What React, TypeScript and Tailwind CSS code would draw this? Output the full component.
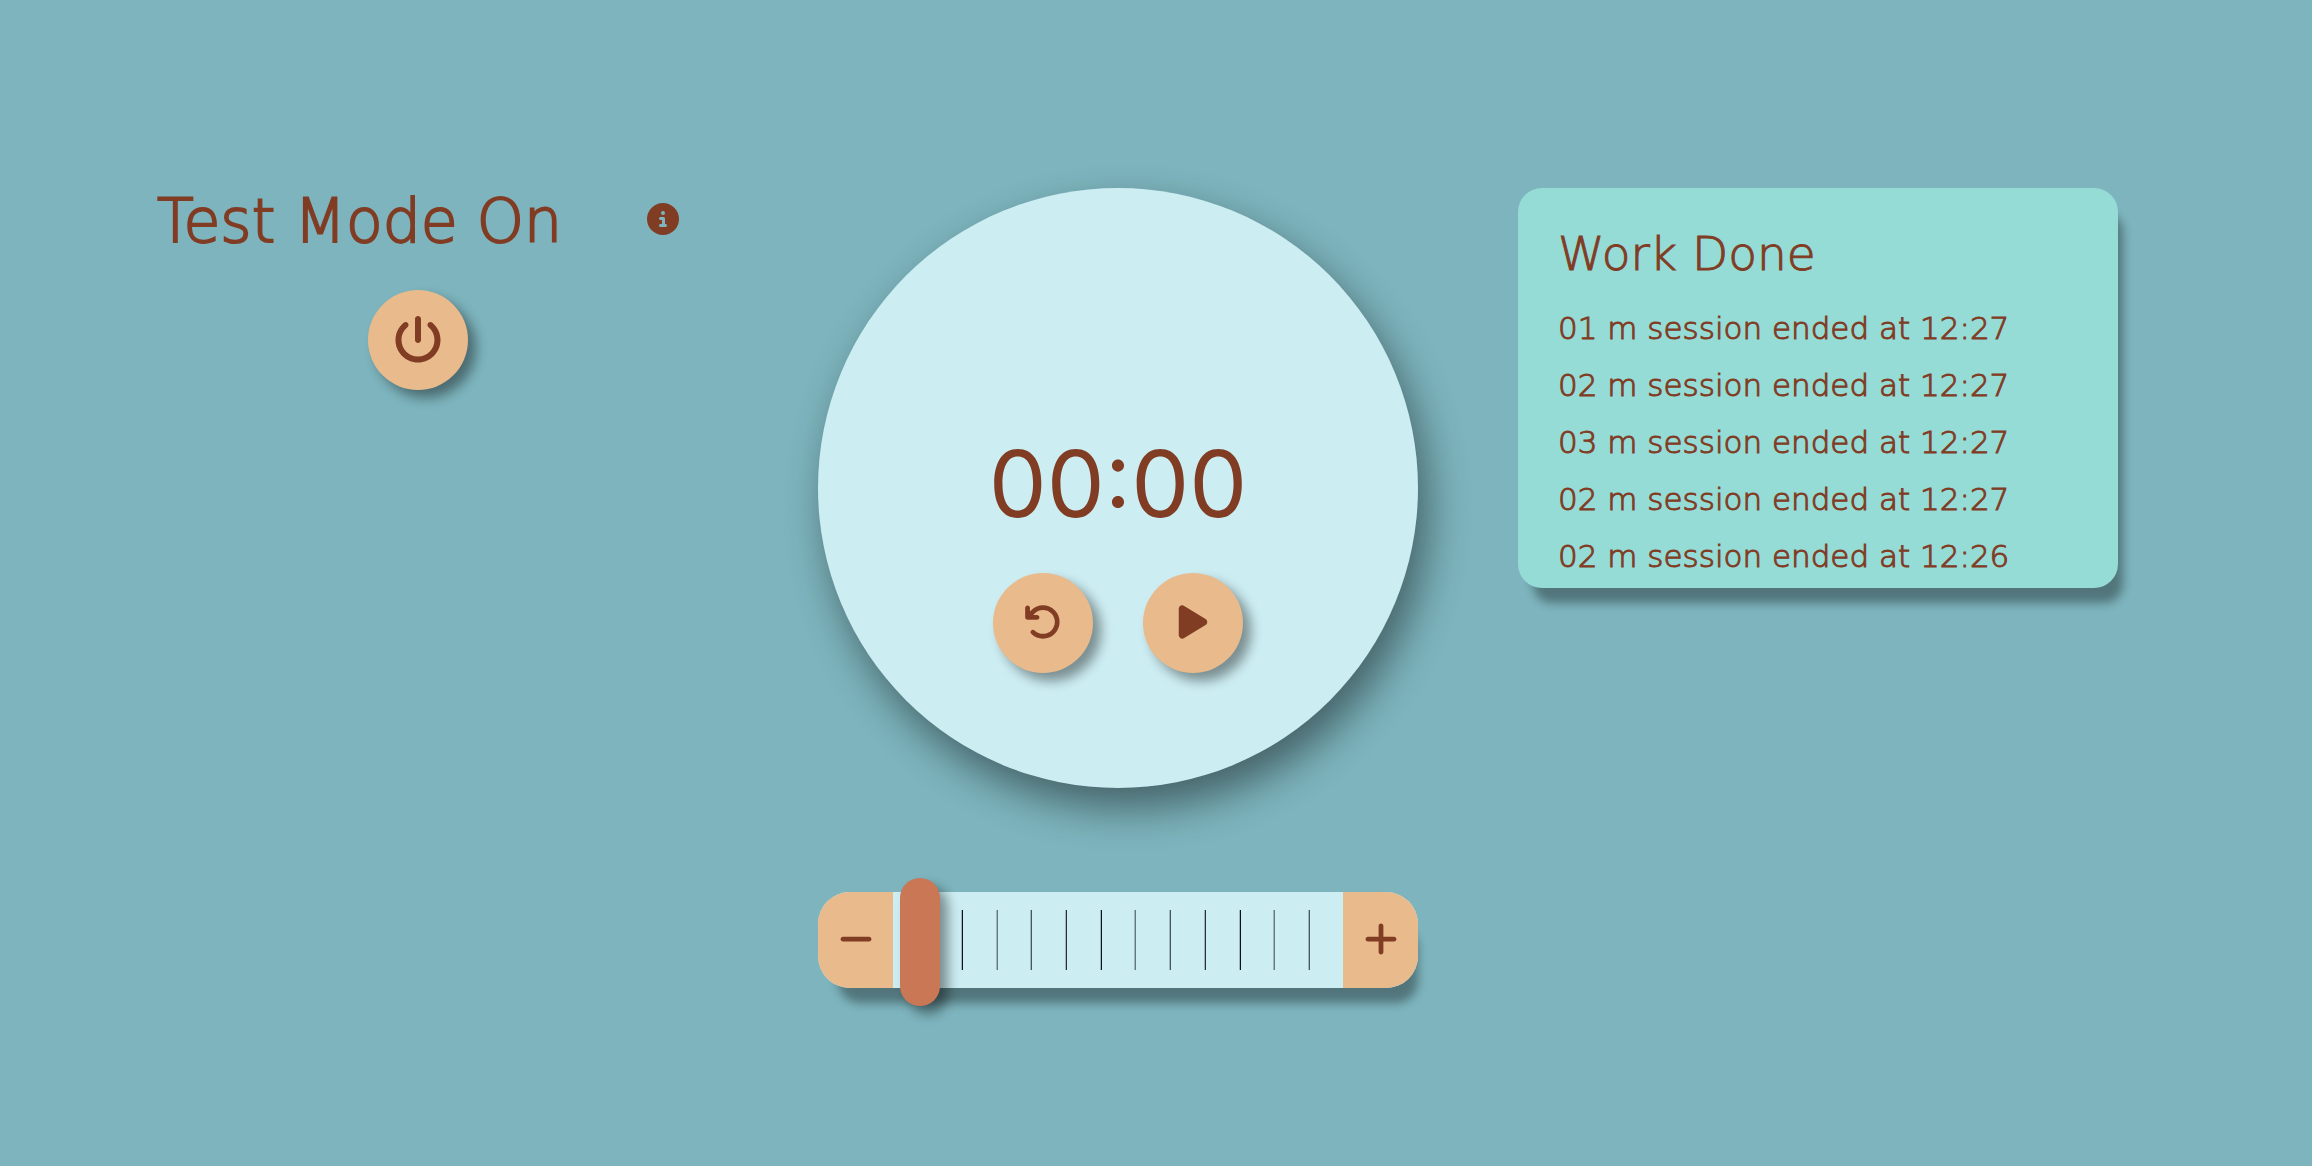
import { useState } from "react";
import {
  FaArrowRotateLeft,
  FaCircleInfo,
  FaMinus,
  FaPlay,
  FaPlus,
  FaPowerOff,
} from "react-icons/fa6";

const sessions = [
  { length: "01", end: "12:27" },
  { length: "02", end: "12:27" },
  { length: "03", end: "12:27" },
  { length: "02", end: "12:27" },
  { length: "02", end: "12:26" },
];

const ticks = [
  "bg-[#0c1220]",
  "bg-[#66757e]",
  "bg-[#48565f]",
  "bg-[#262f3b]",
  "bg-[#0c1220]",
  "bg-[#66757e]",
  "bg-[#48565f]",
  "bg-[#262f3b]",
  "bg-[#0c1220]",
  "bg-[#66757e]",
  "bg-[#48565f]",
];

const roundButton =
  "flex size-[100px] items-center justify-center rounded-full bg-[#e8ba8c] shadow-[8px_8px_12px_rgba(0,0,0,0.4)]";

function TestMode() {
  return (
    <section className="flex flex-col items-center">
      <div className="flex w-full items-start justify-between px-[39px]">
        <h1 className="text-[60px] leading-[66px] font-extralight whitespace-nowrap [-webkit-text-stroke:2px_#813c24]">
          Test Mode On
        </h1>
        <button type="button" aria-label="About test mode" className="mt-[15px]">
          <FaCircleInfo size={32} />
        </button>
      </div>
      <button type="button" aria-label="Toggle test mode" className={`${roundButton} mt-9`}>
        <FaPowerOff size={48} />
      </button>
    </section>
  );
}

function Dial() {
  return (
    <div className="flex aspect-square w-full flex-col items-center rounded-full bg-[#ccedf2] pt-[246px] shadow-[10px_20px_40px_rgba(0,0,0,0.45)]">
      <time className="font-[Inter,sans-serif] text-[92px] leading-[100px] font-normal">00:00</time>
      <div className="mt-[39px] flex gap-[50px]">
        <button type="button" aria-label="Reset" className={`${roundButton} pb-0.5`}>
          <FaArrowRotateLeft size={38} />
        </button>
        <button type="button" aria-label="Start" className={`${roundButton} pb-0.5`}>
          <FaPlay size={38} />
        </button>
      </div>
    </div>
  );
}

function DurationSlider() {
  const [value, setValue] = useState(0);
  return (
    <div className="flex h-24 w-full rounded-[32px] bg-[#ccedf2] shadow-[10px_25px_10px_-10px_rgba(0,0,0,0.35)]">
      <button
        type="button"
        aria-label="Less time"
        onClick={() => setValue(Math.max(0, value - 1))}
        className="flex w-[75px] items-center justify-center rounded-l-[32px] bg-[#e8ba8c] pb-0.5"
      >
        <FaMinus size={38} />
      </button>
      <div className="relative flex-1">
        <div className="flex h-full items-center justify-between pr-[33px] pl-[68px]">
          {ticks.map((tone, i) => (
            <span key={i} className="flex h-[60px]">
              <span className="w-px bg-[#9db7bd]" />
              <span className={`w-px ${tone}`} />
            </span>
          ))}
        </div>
        <input
          type="range"
          aria-label="Session length"
          min={0}
          max={60}
          value={value}
          onChange={(e) => setValue(Number(e.target.value))}
          className="absolute inset-x-[7px] -top-[14px] h-32 appearance-none bg-transparent [&::-webkit-slider-thumb]:h-32 [&::-webkit-slider-thumb]:w-10 [&::-webkit-slider-thumb]:appearance-none [&::-webkit-slider-thumb]:rounded-full [&::-webkit-slider-thumb]:bg-[#ca7756] [&::-webkit-slider-thumb]:shadow-[8px_8px_12px_rgba(0,0,0,0.4)]"
        />
      </div>
      <button
        type="button"
        aria-label="More time"
        onClick={() => setValue(Math.min(60, value + 1))}
        className="flex w-[75px] items-center justify-center rounded-r-[32px] bg-[#e8ba8c] pb-0.5"
      >
        <FaPlus size={38} />
      </button>
    </div>
  );
}

function WorkDone() {
  return (
    <section className="h-[400px] overflow-hidden rounded-3xl bg-[#95dbd6] px-10 pt-10 shadow-[10px_20px_10px_-5px_rgba(0,0,0,0.35)]">
      <h2 className="text-[47px] leading-[52px] font-extralight [-webkit-text-stroke:1px_#813c24]">Work Done</h2>
      <ul className="mt-5 font-extralight">
        {sessions.map((s, i) => (
          <li
            key={i}
            className="text-[31px] leading-[57px] whitespace-nowrap [-webkit-text-stroke:1px_#813c24]"
          >
            {s.length} m session ended at {s.end}
          </li>
        ))}
      </ul>
    </section>
  );
}

export default function App() {
  return (
    <main className="grid min-h-screen grid-cols-3 items-start gap-[100px] bg-[#7db4bd] pt-[188px] pr-[194px] pl-[118px] font-['DejaVu_Sans',sans-serif] text-[#813c24]">
      <TestMode />
      <div className="flex flex-col gap-[104px]">
        <Dial />
        <DurationSlider />
      </div>
      <WorkDone />
    </main>
  );
}
